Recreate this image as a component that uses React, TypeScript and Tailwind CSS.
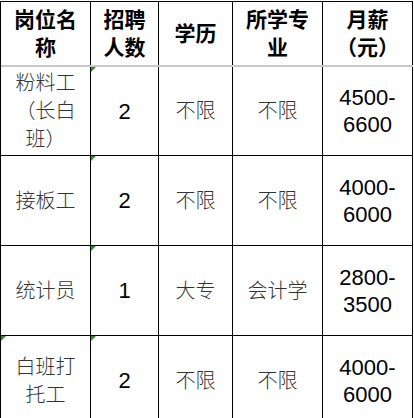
const font = { fontFamily: '"Liberation Sans", "Noto Sans CJK SC", sans-serif' };

type Row = {
  name: string[];
  count: string;
  edu: string;
  major: string;
  pay: string[];
  h: string;
  nameMark?: boolean;
};

const rows: Row[] = [
  { name: ["粉料工", "（长白", "班）"], count: "2", edu: "不限", major: "不限", pay: ["4500-", "6600"], h: "h-[89px]" },
  { name: ["接板工"], count: "2", edu: "不限", major: "不限", pay: ["4000-", "6000"], h: "h-[90px]" },
  { name: ["统计员"], count: "1", edu: "大专", major: "会计学", pay: ["2800-", "3500"], h: "h-[90px]" },
  { name: ["白班打", "托工"], count: "2", edu: "不限", major: "不限", pay: ["4000-", "6000"], h: "h-[90px]", nameMark: true },
];

const Mark = () => (
  <span className="absolute left-0 top-0 h-0 w-0 border-l-[5px] border-b-[5px] border-l-[#2e8b2e] border-b-transparent" />
);

const Cell = ({ children, className = "", mark = false }: { children: React.ReactNode; className?: string; mark?: boolean }) => (
  <div className={`relative flex flex-col items-center justify-center border-r border-black text-center ${className}`}>
    {mark && <Mark />}
    {children}
  </div>
);

const Lines = ({ items, cls }: { items: string[]; cls: string }) => (
  <>
    {items.map((t, i) => (
      <span key={i} className={cls}>
        {t}
      </span>
    ))}
  </>
);

const App = () => {
  const zh = "text-[20px] font-light leading-[28px] text-[#333]";
  const num = "text-[22px] leading-[27px] text-black";
  return (
    <div className="min-h-[418px] w-[414px] overflow-hidden bg-white pt-px" style={font}>
      <div className="w-[413px] border-l border-t border-black">
        {/* header */}
        <div className="grid h-[65px] grid-cols-[90px_68px_74px_90px_90px] border-b-2 border-[#c8c8c8] text-[21px] font-bold leading-[28px] text-black">
          <Cell><Lines items={["岗位名", "称"]} cls="" /></Cell>
          <Cell><Lines items={["招聘", "人数"]} cls="" /></Cell>
          <Cell>学历</Cell>
          <Cell><Lines items={["所学专", "业"]} cls="" /></Cell>
          <Cell><Lines items={["月薪", "（元）"]} cls="" /></Cell>
        </div>

        {rows.map((r, i) => (
          <div key={i} className={`grid grid-cols-[90px_68px_74px_90px_90px] border-b border-black ${r.h}`}>
            <Cell mark={r.nameMark}><Lines items={r.name} cls={zh} /></Cell>
            <Cell mark><span className={num}>{r.count}</span></Cell>
            <Cell><span className={zh}>{r.edu}</span></Cell>
            <Cell><span className={zh}>{r.major}</span></Cell>
            <Cell><Lines items={r.pay} cls={num} /></Cell>
          </div>
        ))}
      </div>
    </div>
  );
};

export default App;
